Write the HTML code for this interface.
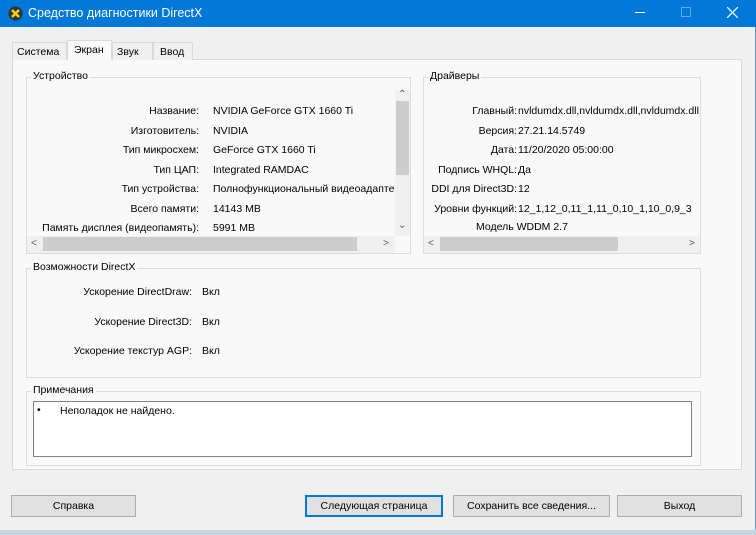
<!DOCTYPE html>
<html><head><meta charset="utf-8"><style>
*{margin:0;padding:0;box-sizing:border-box}
body{width:756px;height:535px;background:#f0f0f0;font-family:"Liberation Sans",sans-serif;font-size:10.5px;color:#000;position:relative;overflow:hidden}
.a{position:absolute;white-space:nowrap}
.title{left:0;top:0;width:756px;height:27px;background:#0078d7;color:#fff;font-size:12.5px}
.grp{position:absolute;border:1px solid #dcdcdc}
.lbl{position:absolute;background:#f9f9f9;padding:0 2px;top:-8px;left:4px;color:#000}
.r{text-align:right}
.btn{position:absolute;height:22px;background:#e1e1e1;border:1px solid #adadad;text-align:center;line-height:20px}
.sb{position:absolute;background:#f0f0f0}
.th{position:absolute;background:#cdcdcd}
.ar{position:absolute;color:#606060;font-size:10px}
</style></head><body>
<div class="a title">
 <svg class="a" style="left:8px;top:6px" width="15" height="15" viewBox="0 0 15 15"><circle cx="7.5" cy="7.5" r="7" fill="#333"/><path d="M4 4L11 11M11 4L4 11" stroke="#f0d020" stroke-width="2.5"/></svg>
 <span class="a" style="left:28px;top:6px">Средство диагностики DirectX</span>
 <div class="a" style="left:635px;top:12px;width:10px;height:1px;background:#fff"></div>
 <div class="a" style="left:681px;top:7px;width:10px;height:10px;border:1px solid #6aa8e0"></div>
 <svg class="a" style="left:727px;top:7px" width="11" height="11"><path d="M0 0L11 11M11 0L0 11" stroke="#fff" stroke-width="1.2"/></svg>
</div>
<div class="a" style="left:755px;top:27px;width:1px;height:508px;background:#5a9bd8"></div>
<div class="a" style="left:0;top:530px;width:756px;height:5px;background:#c8d4e0"></div>
<div class="a" style="left:12px;top:59px;width:730px;height:411px;background:#f9f9f9;border:1px solid #d9d9d9"></div>
<div class="a" style="left:12px;top:42px;width:55px;height:18px;border:1px solid #d9d9d9;border-bottom:none;background:#f0f0f0;padding:3px 4px">Система</div>
<div class="a" style="left:67px;top:40px;width:45px;height:20px;border:1px solid #d9d9d9;border-bottom:none;background:#f9f9f9;padding:3px 6px">Экран</div>
<div class="a" style="left:112px;top:42px;width:41px;height:18px;border:1px solid #d9d9d9;border-bottom:none;background:#f0f0f0;padding:3px 4px">Звук</div>
<div class="a" style="left:153px;top:42px;width:40px;height:18px;border:1px solid #d9d9d9;border-bottom:none;background:#f0f0f0;padding:3px 6px">Ввод</div>
<div class="grp" style="left:26px;top:77px;width:385px;height:177px"><span class="lbl">Устройство</span></div>
<div class="a r" style="left:30px;top:102px;width:169px;line-height:19.5px">Название:<br>Изготовитель:<br>Тип микросхем:<br>Тип ЦАП:<br>Тип устройства:<br>Всего памяти:<br>Память дисплея (видеопамять):</div>
<div class="a" style="left:213px;top:102px;width:182px;overflow:hidden;line-height:19.5px">NVIDIA GeForce GTX 1660 Ti<br>NVIDIA<br>GeForce GTX 1660 Ti<br>Integrated RAMDAC<br>Полнофункциональный видеоадаптер<br>14143 MB<br>5991 MB</div>
<div class="sb" style="left:395px;top:90px;width:15px;height:146px"></div>
<div class="th" style="left:396px;top:101px;width:13px;height:74px"></div>
<span class="ar" style="left:398px;top:89px">&#8963;</span><span class="ar" style="left:398px;top:220px">&#8964;</span>
<div class="sb" style="left:27px;top:236px;width:368px;height:17px"></div>
<div class="th" style="left:43px;top:237px;width:314px;height:14px"></div>
<span class="ar" style="left:31px;top:238px">&lt;</span><span class="ar" style="left:383px;top:238px">&gt;</span>
<div class="grp" style="left:423px;top:77px;width:278px;height:177px"><span class="lbl">Драйверы</span></div>
<div class="a r" style="left:424px;top:102px;width:93px;line-height:19.5px">Главный:<br>Версия:<br>Дата:<br>Подпись WHQL:<br>DDI для Direct3D:<br>Уровни функций:</div>
<div class="a" style="left:518px;top:102px;width:182px;overflow:hidden;line-height:19.5px">nvldumdx.dll,nvldumdx.dll,nvldumdx.dll<br>27.21.14.5749<br>11/20/2020 05:00:00<br>Да<br>12<br>12_1,12_0,11_1,11_0,10_1,10_0,9_3</div>
<div class="a" style="left:476px;top:221px">Модель WDDM 2.7</div>
<div class="sb" style="left:424px;top:236px;width:276px;height:17px"></div>
<div class="th" style="left:440px;top:237px;width:178px;height:14px"></div>
<span class="ar" style="left:428px;top:238px">&lt;</span><span class="ar" style="left:689px;top:238px">&gt;</span>
<div class="grp" style="left:26px;top:268px;width:675px;height:110px"><span class="lbl">Возможности DirectX</span></div>
<div class="a r" style="left:30px;top:286px;width:162px">Ускорение DirectDraw:</div>
<div class="a r" style="left:30px;top:316px;width:162px">Ускорение Direct3D:</div>
<div class="a r" style="left:30px;top:345px;width:162px">Ускорение текстур AGP:</div>
<div class="a" style="left:202px;top:286px">Вкл</div>
<div class="a" style="left:202px;top:316px">Вкл</div>
<div class="a" style="left:202px;top:345px">Вкл</div>
<div class="grp" style="left:26px;top:391px;width:675px;height:75px"><span class="lbl">Примечания</span></div>
<div class="a" style="left:33px;top:401px;width:659px;height:56px;background:#fff;border:1px solid #828282"></div>
<div class="a" style="left:37px;top:404px">•</div>
<div class="a" style="left:60px;top:405px">Неполадок не найдено.</div>
<div class="btn" style="left:11px;top:495px;width:125px">Справка</div>
<div class="btn" style="left:305px;top:495px;width:138px;border:2px solid #0078d7;line-height:18px">Следующая страница</div>
<div class="btn" style="left:453px;top:495px;width:157px">Сохранить все сведения...</div>
<div class="btn" style="left:617px;top:495px;width:125px">Выход</div>
</body></html>
